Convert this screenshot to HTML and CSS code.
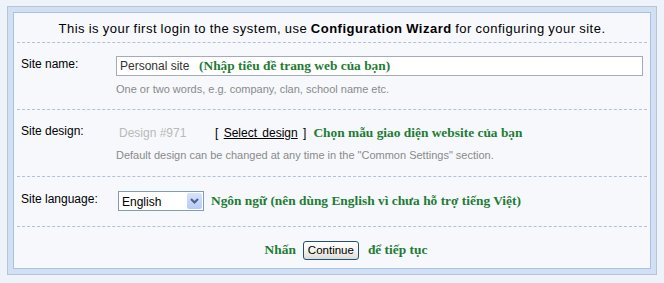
FILE: index.html
```html
<!DOCTYPE html>
<html>
<head>
<meta charset="utf-8">
<link rel="stylesheet" href="styles.css">
</head>
<body>
<div class="frame">
  <div class="panel">
    <div class="intro">This is your first login to the system, use <b>Configuration Wizard</b> for configuring your site.</div>
    <div class="row row-name">
      <div class="label">Site name:</div>
      <div class="field">
        <div class="textbox"><span class="val">Personal site</span><span class="note">(Nhập tiêu đề trang web của bạn)</span></div>
        <div class="hint">One or two words, e.g. company, clan, school name etc.</div>
      </div>
    </div>
    <div class="row row-design">
      <div class="label">Site design:</div>
      <div class="field">
        <div class="line"><span class="design">Design #971</span><span class="select-link">[ <u>Select design</u> ]</span><span class="note">Chọn mẫu giao diện website của bạn</span></div>
        <div class="hint">Default design can be changed at any time in the "Common Settings" section.</div>
      </div>
    </div>
    <div class="row row-lang">
      <div class="label">Site language:</div>
      <div class="field">
        <div class="line">
          <div class="select"><span class="opt">English</span><span class="drop"><svg width="9" height="6" viewBox="0 0 9 6"><path d="M1 1 L4.5 4.5 L8 1" fill="none" stroke="#4d6185" stroke-width="2"/></svg></span></div>
          <span class="note">Ngôn ngữ (nên dùng English vì chưa hỗ trợ tiếng Việt)</span>
        </div>
      </div>
    </div>
    <div class="footer">
      <span class="note">Nhấn</span>
      <span class="btn">Continue</span>
      <span class="note">để tiếp tục</span>
    </div>
  </div>
</div>
</body>
</html>
```
FILE: styles.css
```css
html, body {
  margin: 0;
  padding: 0;
}
body {
  background: #eef2f9;
  font-family: "Liberation Sans", Arial, sans-serif;
  color: #000;
  width: 664px;
  height: 283px;
  overflow: hidden;
}
.frame {
  margin: 6px 7px 0 7px;
  border: 1px solid #b8c3d3;
  background: #d3e0f3;
  padding: 5px;
  height: 257px;
}
.panel {
  border: 1px solid #a8c2e6;
  background: #f6f8fc;
  height: 255px;
  padding: 0 3px;
}
.intro {
  font-size: 13px;
  text-align: center;
  height: 29px;
  line-height: 31px;
  border-bottom: 1px dashed #b3c0dc;
  letter-spacing: 0.5px;
  word-spacing: -0.5px;
}
.intro b { font-weight: bold; }
.row {
  display: grid;
  grid-template-columns: 99px 1fr;
  border-bottom: 1px dashed #b3c0dc;
  font-size: 12px;
}
.label {
  padding-left: 4px;
  font-size: 12px;
}
.row-name { height: 66px; }
.row-name .label { padding-top: 14px; }
.row-name .field { padding-top: 13px; }
.textbox {
  width: 522px;
  height: 18px;
  border: 1px solid #a5acb5;
  background: #fff;
  display: flex;
  align-items: center;
  padding-left: 3px;
}
.val {
  color: #333;
  font-size: 12px;
  width: 79px;
}
.note {
  color: #1e7c34;
  font-family: "Liberation Serif", "Times New Roman", serif;
  font-weight: bold;
  font-size: 13.4px;
}
.hint {
  color: #8a8a8a;
  font-size: 11px;
  margin-top: 7px;
}
.row-design { height: 66px; }
.row-design .label { padding-top: 14px; }
.row-design .field { padding-top: 14px; }
.line {
  display: flex;
  align-items: center;
  height: 18px;
}
.design {
  color: #b9b9b9;
  font-size: 12px;
  margin-left: 3px;
  width: 96px;
}
.select-link {
  font-size: 12px;
  color: #000;
  margin-right: 7px;
  word-spacing: 2px;
}
.row-design .hint { margin-top: 7px; }
.row-lang { height: 49px; }
.row-lang .label { padding-top: 15px; }
.row-lang .field { padding-top: 14px; }
.row-lang .line { height: 20px; }
.select {
  margin-left: 2px;
  width: 84px;
  height: 18px;
  border: 1px solid #7f9db9;
  background: #fff;
  display: flex;
  align-items: center;
  justify-content: space-between;
  margin-right: 7px;
}
.opt {
  font-size: 12px;
  padding-left: 3px;
  padding-top: 2px;
}
.drop {
  width: 15px;
  height: 16px;
  margin-right: 1px;
  background: linear-gradient(#d6e3fd, #b6cbf8);
  border-radius: 2px;
  display: flex;
  align-items: center;
  justify-content: center;
}
.footer {
  display: flex;
  justify-content: center;
  align-items: center;
  height: 42px;
  padding-top: 2px;
  padding-left: 28px;
}
.footer .btn { margin: 0 9px 0 7px; }
.btn {
  font-size: 11.5px;
  font-family: "Liberation Sans", Arial, sans-serif;
  border: 1px solid #1c5180;
  border-radius: 3px;
  background: linear-gradient(#ffffff, #f0f0ea 60%, #dcdcd2);
  width: 54px;
  height: 17px;
  line-height: 17px;
  text-align: center;
  color: #000;
}
```
